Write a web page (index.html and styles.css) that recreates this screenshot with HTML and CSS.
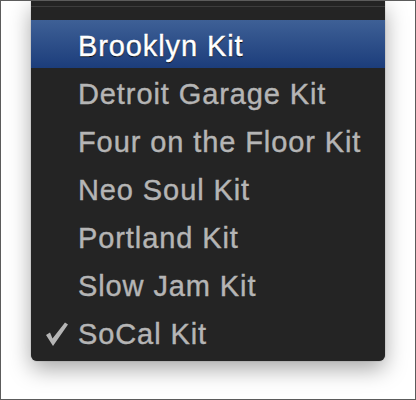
FILE: index.html
```html
<!DOCTYPE html>
<html lang="en">
  <head>
    <meta charset="UTF-8" />
    <title>Drum Kits</title>
    <link rel="stylesheet" href="styles.css">
  </head>
  <body>
    <div class="frame">
      <div class="menu">
        <div class="separator"></div>
        <ul class="items">
          <li class="item selected">Brooklyn Kit</li>
          <li class="item">Detroit Garage Kit</li>
          <li class="item">Four on the Floor Kit</li>
          <li class="item">Neo Soul Kit</li>
          <li class="item">Portland Kit</li>
          <li class="item">Slow Jam Kit</li>
          <li class="item">
            <svg class="check" width="24" height="26" viewBox="0 0 24 26">
              <path d="M1 13 L5 10.5 L7.5 16.5 L20 0.5 L23 2.5 L8 24 Z" fill="#b5b5b5"/>
            </svg>
            SoCal Kit
          </li>
        </ul>
      </div>
    </div>
  </body>
</html>
```

FILE: styles.css
```css
* {
  margin: 0;
  padding: 0;
  box-sizing: border-box;
  font-family: "Liberation Sans", Arial, sans-serif;
}
body {
  background: #ffffff;
}
.frame {
  width: 416px;
  height: 400px;
  border: 1px solid #5c5c5c;
  background: #ffffff;
  overflow: hidden;
}
.menu {
  width: 354px;
  height: 360px;
  margin-left: 30px;
  background: #242424;
  border-radius: 0 0 6px 6px;
  box-shadow: 0 8px 22px rgba(0, 0, 0, 0.35), 0 0 1px rgba(0, 0, 0, 0.6);
  padding-top: 5px;
}
.separator {
  height: 1px;
  background: #3d3d3d;
  margin-bottom: 13px;
}
.items {
  list-style: none;
}
.item {
  position: relative;
  height: 48px;
  line-height: 52px;
  padding-left: 47px;
  font-size: 29px;
  letter-spacing: 0.9px;
  color: #b5b5b5;
  -webkit-text-stroke: 0.4px #b5b5b5;
  white-space: nowrap;
}
.item.selected {
  background: linear-gradient(#3e6096, #1c3d7b);
  color: #ffffff;
  -webkit-text-stroke: 0.4px #ffffff;
  text-shadow: 0 1px 1px #000000;
}
.check {
  position: absolute;
  left: 14px;
  top: 14px;
}
```
